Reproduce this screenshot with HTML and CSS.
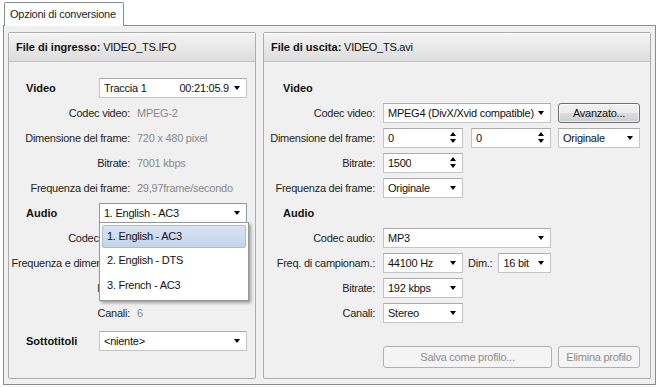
FILE: index.html
```html
<!DOCTYPE html>
<html lang="it">
<head>
<meta charset="utf-8">
<title>Opzioni di conversione</title>
<link rel="stylesheet" href="styles.css">
</head>
<body>
<div class="window">
  <div class="tabbar"><div class="tab">Opzioni di conversione</div></div>
  <div class="pane">
    <section class="panel panel-in">
      <header class="ph"><b>File di ingresso:</b> VIDEO_TS.IFO</header>
      <div class="pbody">
        <div class="row head"><span class="hl">Video</span>
          <div class="combo w148"><span class="ct">Traccia 1</span><span class="cr">00:21:05.9</span><i class="arr"></i></div>
        </div>
        <div class="row"><span class="lbl">Codec video:</span><span class="val">MPEG-2</span></div>
        <div class="row"><span class="lbl">Dimensione del frame:</span><span class="val">720 x 480 pixel</span></div>
        <div class="row"><span class="lbl">Bitrate:</span><span class="val">7001 kbps</span></div>
        <div class="row"><span class="lbl">Frequenza dei frame:</span><span class="val">29,97frame/secondo</span></div>
        <div class="row head"><span class="hl">Audio</span>
          <div class="combo w148 focus"><span class="ct">1. English - AC3</span><i class="arr"></i>
            <ul class="drop">
              <li class="sel">1. English - AC3</li>
              <li>2. English - DTS</li>
              <li>3. French - AC3</li>
            </ul>
          </div>
        </div>
        <div class="row"><span class="lbl hid">Codec audio:</span></div>
        <div class="row"><span class="lbl hid">Frequenza e dimensione:</span></div>
        <div class="row"><span class="lbl hid">Bitrate:</span></div>
        <div class="row"><span class="lbl">Canali:</span><span class="val">6</span></div>
        <div class="row head sub"><span class="hl">Sottotitoli</span>
          <div class="combo w148"><span class="ct">&lt;niente&gt;</span><i class="arr"></i></div>
        </div>
      </div>
    </section>
    <section class="panel panel-out">
      <header class="ph"><b>File di uscita:</b> VIDEO_TS.avi</header>
      <div class="pbody">
        <div class="row head"><span class="hl">Video</span></div>
        <div class="row"><span class="lbl">Codec video:</span>
          <div class="combo w168"><span class="ct">MPEG4 (DivX/Xvid compatible)</span><i class="arr"></i></div>
          <button class="btn w82">Avanzato...</button>
        </div>
        <div class="row"><span class="lbl">Dimensione del frame:</span>
          <div class="spin w80"><span class="ct">0</span><i class="sarr"><i class="up"></i><i class="dn"></i></i></div>
          <div class="spin w80"><span class="ct">0</span><i class="sarr"><i class="up"></i><i class="dn"></i></i></div>
          <div class="combo w82"><span class="ct">Originale</span><i class="arr"></i></div>
        </div>
        <div class="row"><span class="lbl">Bitrate:</span>
          <div class="spin w80"><span class="ct">1500</span><i class="sarr"><i class="up"></i><i class="dn"></i></i></div>
        </div>
        <div class="row"><span class="lbl">Frequenza dei frame:</span>
          <div class="combo w80"><span class="ct">Originale</span><i class="arr"></i></div>
        </div>
        <div class="row head"><span class="hl">Audio</span></div>
        <div class="row"><span class="lbl">Codec audio:</span>
          <div class="combo w168"><span class="ct">MP3</span><i class="arr"></i></div>
        </div>
        <div class="row"><span class="lbl">Freq. di campionam.:</span>
          <div class="combo w80"><span class="ct">44100 Hz</span><i class="arr"></i></div>
          <span class="dim">Dim.:</span>
          <div class="combo w53"><span class="ct">16 bit</span><i class="arr"></i></div>
        </div>
        <div class="row"><span class="lbl">Bitrate:</span>
          <div class="combo w80"><span class="ct">192 kbps</span><i class="arr"></i></div>
        </div>
        <div class="row"><span class="lbl">Canali:</span>
          <div class="combo w80"><span class="ct">Stereo</span><i class="arr"></i></div>
        </div>
        <div class="btnrow">
          <button class="btn dis w169" disabled>Salva come profilo...</button>
          <button class="btn dis w82" disabled>Elimina profilo</button>
        </div>
      </div>
    </section>
  </div>
</div>
</body>
</html>
```
FILE: styles.css
```css
* { box-sizing: border-box; }
html, body { margin: 0; padding: 0; }
body {
  background: #fff;
  font-family: "Liberation Sans", Arial, sans-serif;
  font-size: 11px;
  color: #1e1e1e;
  width: 658px;
  height: 387px;
  overflow: hidden;
}
.window { padding: 2px 2px 0 3px; }
.tabbar { display: flex; height: 23px; }
.tab {
  margin-left: 1px;
  height: 24px;
  padding: 0 7px 0 5px;
  border: 1px solid #898c95;
  border-bottom: none;
  border-radius: 2px 2px 0 0;
  background: #fff;
  line-height: 22px;
  letter-spacing: -0.25px;
  position: relative;
  z-index: 2;
}
.pane {
  height: 360px;
  border: 1px solid #898c95;
  background: #f0f0f0;
  padding: 6px 4px 5px 4px;
  display: flex;
  gap: 7px;
}
.panel {
  border: 1px solid #adadad;
  border-radius: 2px;
  background: #f0f0f0;
  display: flex;
  flex-direction: column;
}
.panel-in { width: 248px; }
.panel-out { width: 388px; }
.ph {
  height: 29px;
  border-bottom: 1px solid #c2c2c2;
  background: linear-gradient(#f4f4f4, #dddddd);
  padding-left: 7px;
  line-height: 28px;
  letter-spacing: -0.25px;
  color: #111;
  box-shadow: inset 0 1px 0 #fff;
}
.ph b { letter-spacing: 0; }
.pbody { padding-top: 13px; position: relative; }
.row {
  height: 25px;
  display: flex;
  align-items: center;
  letter-spacing: -0.25px;
}
.row.head { padding-left: 17px; }
.row.sub { margin-top: 3px; }
.panel-out .row.head { padding-left: 19px; }
.hl { font-weight: bold; letter-spacing: 0; color: #111; }
.panel-in .hl { width: 73px; }
.lbl { text-align: right; white-space: nowrap; flex: none; }
.panel-in .lbl { width: 121px; margin-right: 7px; }
.panel-out .lbl { width: 111px; margin-right: 8px; }
.val { color: #8a8a8a; white-space: nowrap; }

.combo, .spin {
  height: 20px;
  background: #fff;
  border: 1px solid #c4c4c4;
  border-top-color: #acacac;
  display: flex;
  align-items: center;
  padding: 0 6px 0 4px;
  position: relative;
  flex: none;
  color: #111;
}
.combo.focus { border-color: #8a9bb0; }
.ct { white-space: nowrap; overflow: hidden; }
.cr { margin-left: auto; margin-right: 5px; }
.arr {
  margin-left: auto;
  width: 0; height: 0;
  border-left: 3.5px solid transparent;
  border-right: 3.5px solid transparent;
  border-top: 4px solid #000;
  flex: none;
}
.cr + .arr { margin-left: 0; }
.sarr {
  margin-left: auto;
  display: flex;
  flex-direction: column;
  gap: 3px;
  flex: none;
}
.up, .dn {
  display: block;
  width: 0; height: 0;
  border-left: 3.5px solid transparent;
  border-right: 3.5px solid transparent;
}
.up { border-bottom: 4px solid #000; }
.dn { border-top: 4px solid #000; }

.w148 { width: 148px; }
.w168 { width: 168px; }
.w169 { width: 169px; }
.w80 { width: 80px; }
.w82 { width: 82px; }
.w53 { width: 53px; }
.spin + .spin { margin-left: 8px; }
.spin + .combo { margin-left: 7px; }
.combo + .btn { margin-left: 7px; }
.dim { margin: 0 6px 0 5px; }

.btn {
  height: 20px;
  font: inherit;
  letter-spacing: -0.25px;
  color: #111;
  border: 1px solid #707070;
  border-radius: 3px;
  background: linear-gradient(#f2f2f2 0%, #ebebeb 50%, #dddddd 51%, #cfcfcf 100%);
  box-shadow: inset 0 0 0 1px rgba(255,255,255,0.6);
  padding: 0;
  flex: none;
}
.btnrow {
  display: flex;
  gap: 6px;
  padding-left: 119px;
  margin-top: 21px;
}
.btn.dis {
  height: 22px;
  color: #8d8d8d;
  border-color: #adb2b5;
  background: #f4f4f4;
  box-shadow: none;
}

.drop {
  position: absolute;
  top: 18px;
  left: -1px;
  width: 150px;
  margin: 0;
  padding: 2px;
  list-style: none;
  background: #fff;
  border: 1px solid #979797;
  box-shadow: 2px 2px 3px rgba(0,0,0,0.35);
  z-index: 5;
}
.drop li {
  height: 25px;
  line-height: 23px;
  padding-left: 4px;
  border: 1px solid transparent;
  border-radius: 2px;
  color: #111;
  white-space: nowrap;
}
.drop li.sel {
  height: 23px;
  line-height: 21px;
  background: linear-gradient(#d9e4f3, #c3d4ea);
  border-color: #a9bedb;
}
```
